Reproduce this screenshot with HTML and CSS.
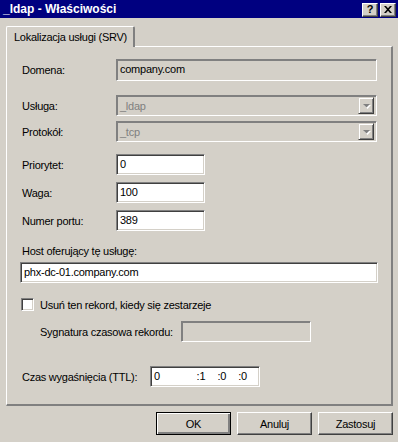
FILE: index.html
```html
<!DOCTYPE html>
<html lang="pl">
<head>
    <meta charset="UTF-8">
    <title>_ldap - Właściwości</title>
    <link rel="stylesheet" href="styles.css">
</head>
<body>
    <div class="window">
        <div class="titlebar">
            <span class="title">_ldap - Właściwości</span>
            <div class="caption-buttons">
                <div class="cap-btn help">?</div>
                <div class="cap-btn">
                    <svg width="8" height="7" viewBox="0 0 8 7">
                        <path d="M0 0h2l2 2.2L6 0h2L5 3.5 8 7H6L4 4.8 2 7H0l3-3.5z" fill="#000"/>
                    </svg>
                </div>
            </div>
        </div>

        <div class="tabs">
            <div class="tab active">Lokalizacja usługi (SRV)</div>
        </div>

        <div class="panel">
            <div class="row r-domena">
                <span class="label">Domena:</span>
                <div class="field readonly w-wide h22">company.com</div>
            </div>
            <div class="row r-usluga">
                <span class="label">Usługa:</span>
                <div class="combo w-wide">
                    <span class="combo-text">_ldap</span>
                    <div class="combo-btn">
                        <svg width="9" height="6" viewBox="0 0 9 6">
                            <path d="M2 2h7l-3.5 4z" fill="#fff"/>
                            <path d="M1 1h7L4.5 4.5z" fill="#808080"/>
                        </svg>
                    </div>
                </div>
            </div>
            <div class="row r-protokol">
                <span class="label">Protokół:</span>
                <div class="combo w-wide">
                    <span class="combo-text">_tcp</span>
                    <div class="combo-btn">
                        <svg width="9" height="6" viewBox="0 0 9 6">
                            <path d="M2 2h7l-3.5 4z" fill="#fff"/>
                            <path d="M1 1h7L4.5 4.5z" fill="#808080"/>
                        </svg>
                    </div>
                </div>
            </div>
            <div class="row r-priorytet">
                <span class="label">Priorytet:</span>
                <div class="field w-short">0</div>
            </div>
            <div class="row r-waga">
                <span class="label">Waga:</span>
                <div class="field w-short">100</div>
            </div>
            <div class="row r-port">
                <span class="label">Numer portu:</span>
                <div class="field w-short">389</div>
            </div>
            <div class="caption r-host">Host oferujący tę usługę:</div>
            <div class="field w-full r-hostfield">phx-dc-01.company.com</div>
            <div class="check-row r-check">
                <div class="checkbox"></div>
                <span>Usuń ten rekord, kiedy się zestarzeje</span>
            </div>
            <div class="row r-stamp">
                <span class="label sub">Sygnatura czasowa rekordu:</span>
                <div class="field readonly w-stamp"></div>
            </div>
            <div class="row r-ttl">
                <span class="label ttl">Czas wygaśnięcia (TTL):</span>
                <div class="field w-ttl ttl-field">
                    <span class="ttl-d">0</span>
                    <span class="ttl-p">:1</span>
                    <span class="ttl-p">:0</span>
                    <span class="ttl-p">:0</span>
                </div>
            </div>
        </div>

        <div class="actions">
            <button class="btn default">OK</button>
            <button class="btn">Anuluj</button>
            <button class="btn">Zastosuj</button>
        </div>
    </div>
</body>
</html>
```

FILE: styles.css
```css
body {
    margin: 0;
    padding: 0;
    background-color: #d4d0c8;
    font-family: "Liberation Sans", Arial, sans-serif;
    font-size: 11px;
    letter-spacing: -0.25px;
    color: #000;
}
.window {
    width: 398px;
    height: 442px;
    background: #d4d0c8;
}
.titlebar {
    height: 18px;
    background: #000080;
    display: flex;
    align-items: center;
    justify-content: space-between;
    padding: 0 2px 0 3px;
}
.title {
    color: #fff;
    font-weight: bold;
    font-size: 12px;
    letter-spacing: 0;
}
.caption-buttons {
    display: flex;
    gap: 2px;
    margin-top: 1px;
}
.cap-btn {
    width: 16px;
    height: 14px;
    box-sizing: border-box;
    background: #d4d0c8;
    border-style: solid;
    border-width: 1px;
    border-color: #fff #404040 #404040 #fff;
    box-shadow: inset -1px -1px #808080;
    display: flex;
    align-items: center;
    justify-content: center;
}
.cap-btn.help {
    font-weight: bold;
    font-size: 11px;
    line-height: 11px;
}
.tabs {
    display: flex;
    padding-left: 6px;
    margin-top: 8px;
}
.tab {
    position: relative;
    z-index: 1;
    height: 21px;
    margin-bottom: -1px;
    box-sizing: border-box;
    padding: 4px 6px 0 7px;
    background: #d4d0c8;
    border-style: solid;
    border-width: 1px 2px 0 1px;
    border-color: #fff #808080 #d4d0c8 #fff;
    border-radius: 2px 2px 0 0;
    white-space: nowrap;
}
.panel {
    margin-left: 6px;
    width: 387px;
    height: 360px;
    box-sizing: border-box;
    border-style: solid;
    border-width: 1px 2px 2px 1px;
    border-color: #fff #808080 #808080 #fff;
    padding: 0 0 0 13px;
    display: flex;
    flex-direction: column;
}
.row {
    display: flex;
    align-items: center;
}
.label {
    width: 96px;
    padding-left: 2px;
    box-sizing: border-box;
    flex: none;
}
.label.sub {
    width: 161px;
    padding-left: 20px;
}
.label.ttl {
    width: 130px;
}
.field {
    height: 21px;
    box-sizing: border-box;
    background: #fff;
    border-style: solid;
    border-width: 1px;
    border-color: #808080 #fff #fff #808080;
    box-shadow: inset 1px 1px #404040, inset -1px -1px #d4d0c8;
    padding: 3px 0 0 3px;
    white-space: nowrap;
}
.field.readonly {
    background: #d4d0c8;
    box-shadow: inset 1px 1px #808080;
}
.h22 { height: 22px; }
.w-wide { width: 261px; }
.w-short { width: 89px; }
.w-full { width: 358px; }
.w-stamp { width: 130px; }
.w-ttl { width: 110px; }

.combo {
    height: 21px;
    box-sizing: border-box;
    background: #d4d0c8;
    border-style: solid;
    border-width: 1px;
    border-color: #808080 #fff #fff #808080;
    box-shadow: inset 1px 1px #808080;
    display: flex;
    align-items: center;
    justify-content: space-between;
    padding: 0 2px 0 3px;
}
.combo-text {
    color: #808080;
}
.combo-btn {
    width: 16px;
    height: 17px;
    box-sizing: border-box;
    border-style: solid;
    border-width: 1px;
    border-color: #d4d0c8 #404040 #404040 #d4d0c8;
    box-shadow: inset 1px 1px #fff, inset -1px -1px #808080;
    display: flex;
    align-items: center;
    justify-content: center;
}

.caption {
    height: 13px;
    line-height: 13px;
    padding-left: 2px;
}
.check-row {
    display: flex;
    align-items: center;
    gap: 6px;
    padding-left: 1px;
}
.checkbox {
    width: 13px;
    height: 13px;
    box-sizing: border-box;
    background: #fff;
    border-style: solid;
    border-width: 1px;
    border-color: #808080 #fff #fff #808080;
    box-shadow: inset 1px 1px #404040, inset -1px -1px #d4d0c8;
}
.ttl-field {
    display: flex;
}
.ttl-d { width: 43px; }
.ttl-p { width: 21px; }

.r-domena { margin-top: 12px; }
.r-usluga { margin-top: 14px; }
.r-protokol { margin-top: 5px; }
.r-priorytet { margin-top: 12px; }
.r-waga { margin-top: 7px; }
.r-port { margin-top: 7px; }
.r-host { margin-top: 14px; }
.r-hostfield { margin-top: 4px; }
.r-check { margin-top: 15px; }
.r-stamp { margin-top: 10px; }
.r-ttl { margin-top: 24px; }

.actions {
    display: flex;
    justify-content: flex-end;
    gap: 6px;
    padding-right: 5px;
    margin-top: 6px;
}
.btn {
    width: 75px;
    height: 23px;
    box-sizing: border-box;
    background: #d4d0c8;
    font-family: "Liberation Sans", Arial, sans-serif;
    font-size: 11px;
    letter-spacing: -0.25px;
    color: #000;
    border-style: solid;
    border-width: 1px;
    border-color: #fff #404040 #404040 #fff;
    box-shadow: inset -1px -1px #808080;
    padding: 0;
}
.btn.default {
    border-color: #000;
    box-shadow: inset 1px 1px #fff, inset -2px -2px #808080;
}
```
